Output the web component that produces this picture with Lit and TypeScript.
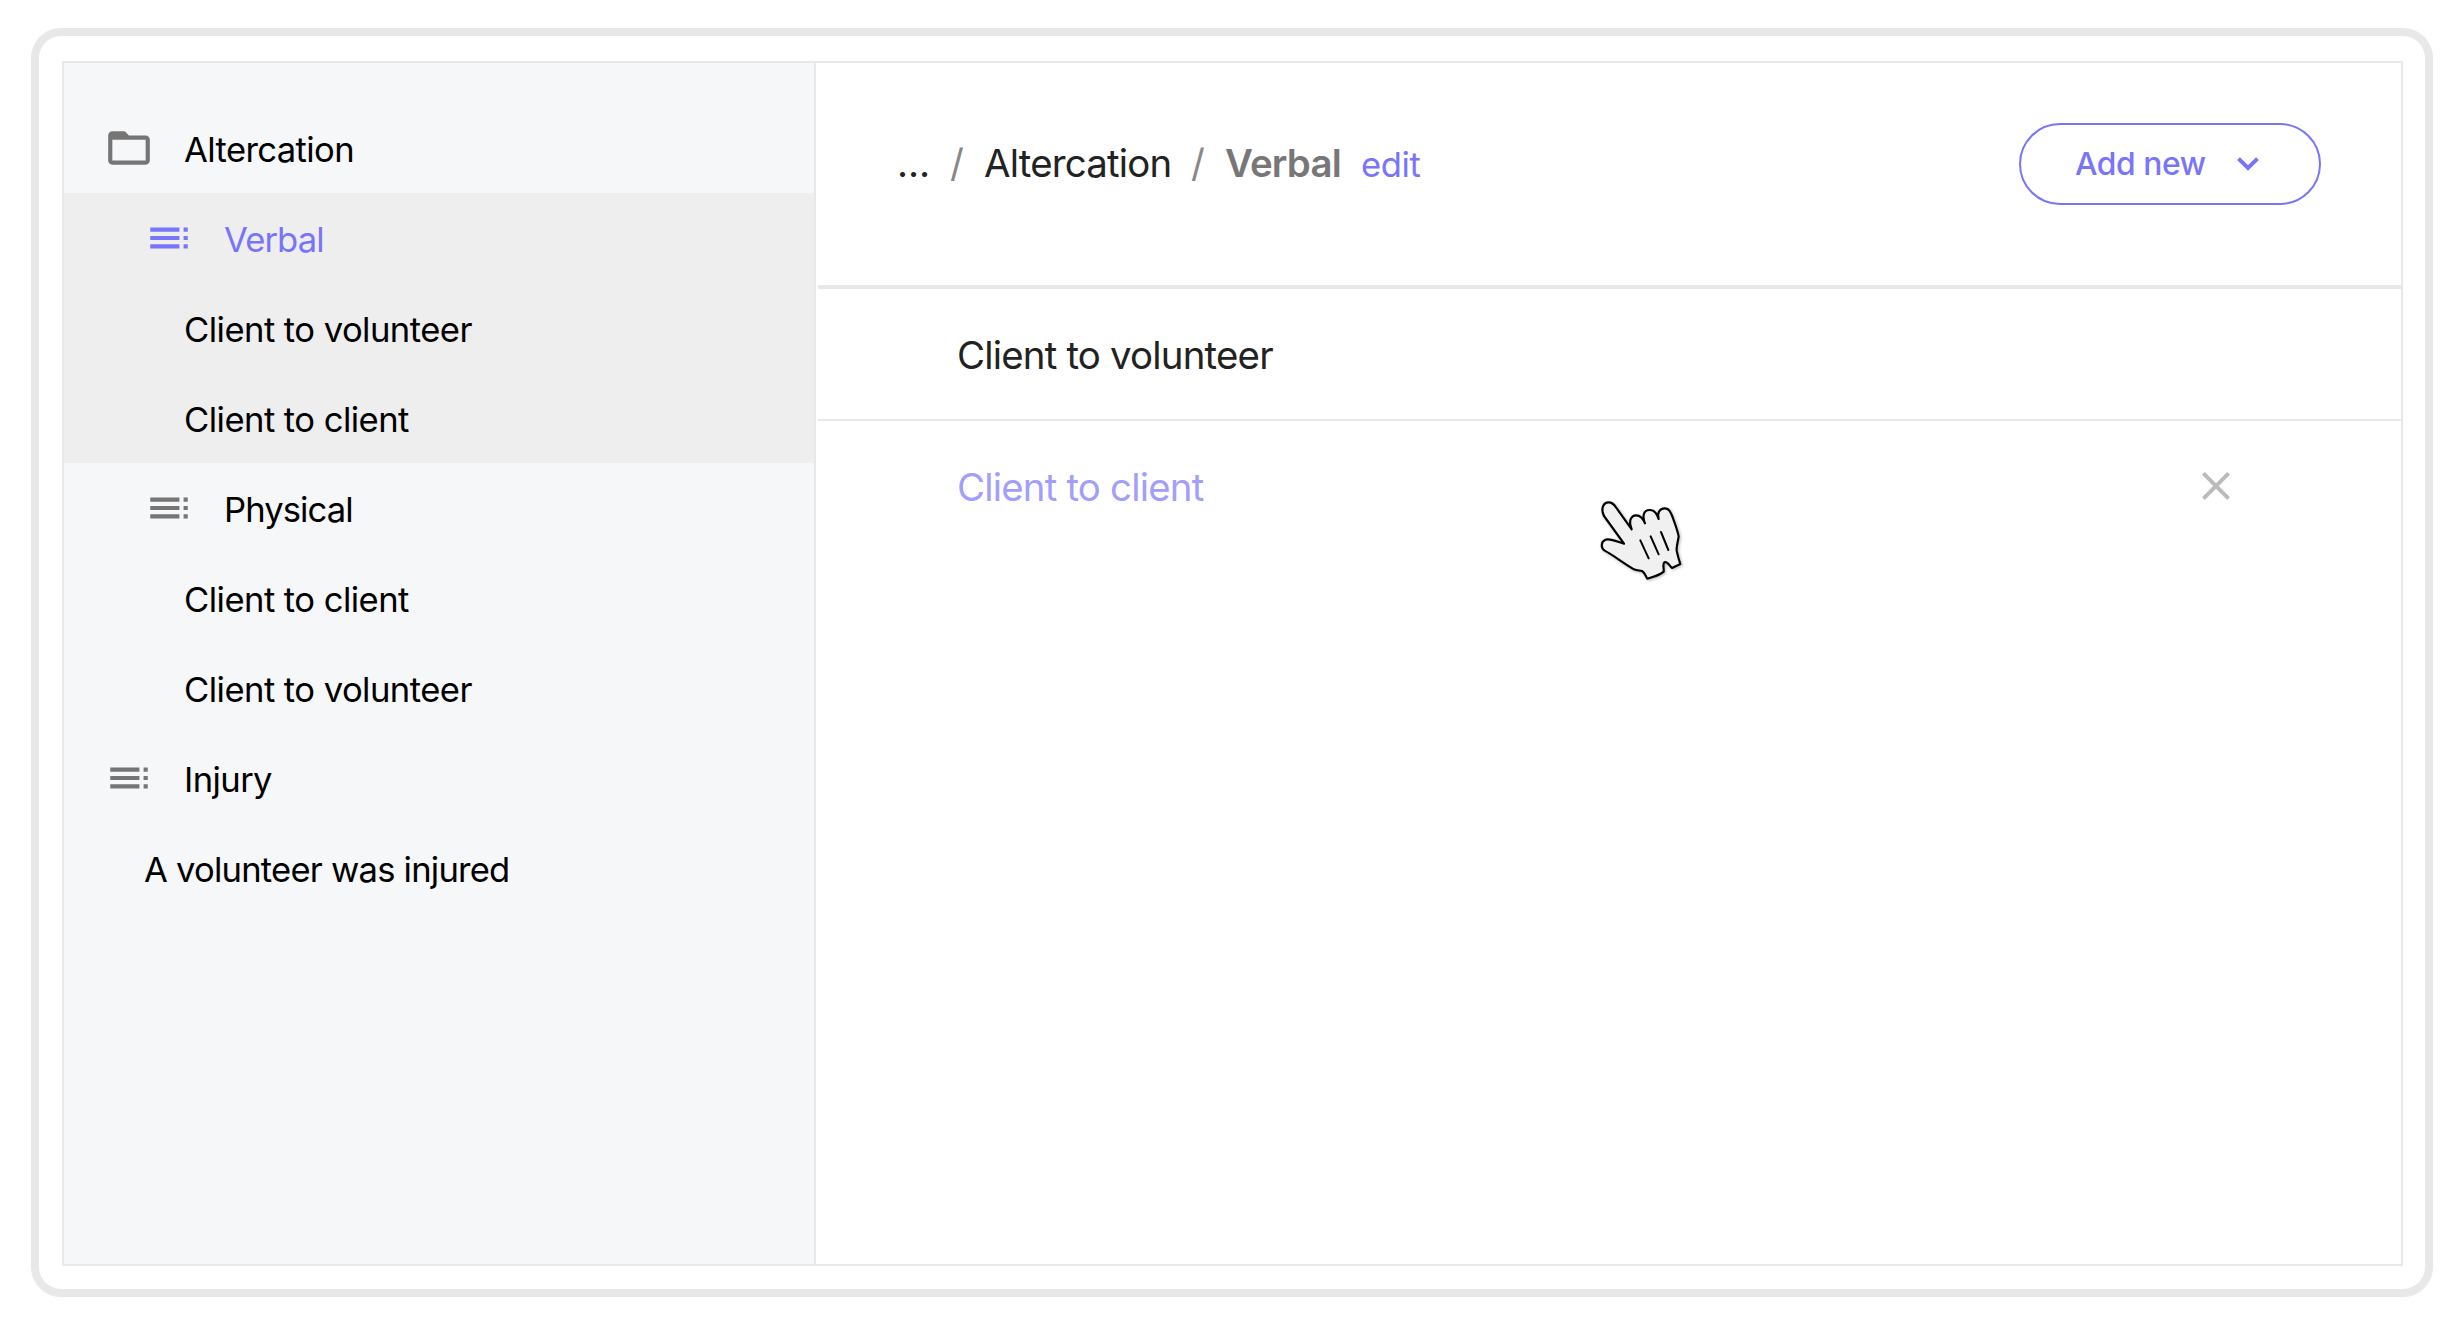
import { LitElement, html, css, svg, nothing } from "lit";
import { customElement, property } from "lit/decorators.js";
import { classMap } from "lit/directives/class-map.js";

type Icon = "folder" | "toc";
interface TreeRow {
  label: string;
  level: "root" | "child" | "leaf" | "root-leaf";
  icon?: Icon;
  active?: boolean;
  shaded?: boolean;
}

const ICONS: Record<Icon, string> = {
  folder:
    "M20 6h-8l-2-2H4c-1.1 0-1.99.9-1.99 2L2 18c0 1.1.9 2 2 2h16c1.1 0 2-.9 2-2V8c0-1.1-.9-2-2-2zm0 12H4V8h16v10z",
  toc: "M3 9h14V7H3v2zm0 4h14v-2H3v2zm0 4h14v-2H3v2zm16 0h2v-2h-2v2zm0-10v2h2V7h-2zm0 6h2v-2h-2v2z",
};

const ROWS: TreeRow[] = [
  { label: "Altercation", level: "root", icon: "folder" },
  { label: "Verbal", level: "child", icon: "toc", active: true, shaded: true },
  { label: "Client to volunteer", level: "leaf", shaded: true },
  { label: "Client to client", level: "leaf", shaded: true },
  { label: "Physical", level: "child", icon: "toc" },
  { label: "Client to client", level: "leaf" },
  { label: "Client to volunteer", level: "leaf" },
  { label: "Injury", level: "root", icon: "toc" },
  { label: "A volunteer was injured", level: "root-leaf" },
];

@customElement("tree-nav")
export class TreeNav extends LitElement {
  @property({ attribute: false }) rows: TreeRow[] = [];

  static styles = css`
    :host {
      display: block;
      box-sizing: border-box;
      padding-top: 40px;
      background: #f6f7f9;
      border-right: 2px solid #e8e8e8;
    }
    .row {
      display: flex;
      align-items: center;
      height: 90px;
      color: #000;
      font-size: 34.6px;
      white-space: nowrap;
    }
    .shaded { background: #eee; }
    .root { padding-left: 40px; letter-spacing: -0.6px; }
    .child { padding-left: 80px; letter-spacing: -0.9px; }
    .leaf { padding-left: 120px; letter-spacing: -0.54px; }
    .root-leaf { padding-left: 80px; letter-spacing: -0.78px; }
    .icon {
      width: 50px;
      height: 50px;
      margin-right: 30px;
      fill: #757575;
    }
    .label { padding-top: 1px; }
    .active { color: #7975fb; }
    .active .icon { fill: #7975fb; }
  `;

  render() {
    return this.rows.map(
      (r) => html`<div
        class=${classMap({ row: true, [r.level]: true, active: !!r.active, shaded: !!r.shaded })}
      >
        ${r.icon
          ? html`<svg class="icon" viewBox="0 0 24 24"><path d=${ICONS[r.icon]}></path></svg>`
          : nothing}
        <span class="label">${r.label}</span>
      </div>`
    );
  }
}

@customElement("app-root")
export class AppRoot extends LitElement {
  static styles = css`
    :host {
      display: block;
      box-sizing: border-box;
      width: 2464px;
      height: 1325px;
      padding: 28px 31px;
      background: #fff;
      font-family: Inter, "Liberation Sans", sans-serif;
    }
    .frame {
      box-sizing: border-box;
      height: 1269px;
      padding: 25px 22px 23px 23px;
      border: 8px solid #e8e8e8;
      border-radius: 30px;
    }
    .window {
      display: grid;
      grid-template-columns: 752px 1fr;
      column-gap: 2px;
      box-sizing: border-box;
      height: 1205px;
      border: 2px solid #e8e8e8;
    }
    .main { position: relative; }
    .header {
      display: flex;
      align-items: flex-start;
      justify-content: space-between;
      box-sizing: border-box;
      height: 226px;
      padding: 0 80px 0 79px;
      border-bottom: 4px solid #e8e8e8;
    }
    .crumbs {
      display: flex;
      align-items: baseline;
      padding-top: 76px;
      font-size: 38.4px;
      line-height: 48px;
      letter-spacing: -0.8px;
      color: #222;
      white-space: nowrap;
    }
    .dots { width: 53px; letter-spacing: -0.1px; }
    .slash { width: 34px; color: #888; }
    .crumb { width: 207px; }
    .current { width: 136px; font-weight: 600; color: #777; }
    .edit { font-size: 34.6px; letter-spacing: -0.4px; color: #7975fb; }
    .add {
      display: flex;
      align-items: center;
      justify-content: space-between;
      box-sizing: border-box;
      width: 302px;
      height: 82px;
      margin-top: 60px;
      padding: 0 60px 0 54px;
      border: 2px solid #7975fb;
      border-radius: 41px;
      background: none;
      color: #7975fb;
      font: 500 31.8px Inter, "Liberation Sans", sans-serif;
      letter-spacing: -0.45px;
      white-space: nowrap;
    }
    .add span { padding-bottom: 1px; }
    .chevron { width: 22px; height: 14px; }
    .item {
      display: flex;
      align-items: center;
      justify-content: space-between;
      box-sizing: border-box;
      height: 132px;
      padding: 0 171px 0 139px;
      border-bottom: 2px solid #e8e8e8;
      font-size: 38.4px;
      letter-spacing: -0.8px;
      color: #222;
    }
    .item span { padding-top: 2px; }
    .item:last-of-type { border-bottom-color: transparent; }
    .hover { color: #a29ffc; }
    .close { width: 28px; height: 28px; }
    .cursor {
      position: absolute;
      left: 742px;
      top: 397px;
      width: 160px;
      height: 150px;
      filter: drop-shadow(1px 1px 1.5px rgba(0, 0, 0, 0.3));
    }
  `;

  private hand = svg`
    <path d="M192 251 L132 168 C122 150 128 127 146 127 C155 127 162 133 168 142 L215 208
      C206 190 209 166 229 166 C243 166 249 176 255 190 C247 170 249 150 269 150 C285 150 290 162 296 177
      C291 160 298 145 314 145 C328 145 333 159 338 172 C346 194 353 212 356 229 C354 244 349 258 350 272
      C353 286 356 298 361 312 L336 324 C328 317 325 306 315 306 C306 309 312 322 311 335
      C299 346 280 351 262 356 C257 349 256 339 246 333 C238 331 231 332 222 328
      C190 310 164 288 134 272 C122 264 122 246 136 239 C152 234 176 247 192 251 Z"
      fill="#f0f0f0" stroke="#000" stroke-width="6.5" stroke-linejoin="round"></path>
    <path d="M241 241 L266 295 M272 229 L296 283 M303 216 L325 270"
      fill="none" stroke="#000" stroke-width="6" stroke-linecap="round"></path>`;

  render() {
    return html`
      <div class="frame">
        <div class="window">
          <tree-nav .rows=${ROWS}></tree-nav>
          <div class="main">
            <div class="header">
              <div class="crumbs">
                <span class="dots">...</span>
                <span class="slash">/</span>
                <span class="crumb">Altercation</span>
                <span class="slash">/</span>
                <span class="current">Verbal</span>
                <span class="edit">edit</span>
              </div>
              <button class="add">
                <span>Add new</span>
                <svg class="chevron" viewBox="0 0 22 14">
                  <path d="M1.5 1.6 L11 11 L20.5 1.6" fill="none" stroke="currentColor" stroke-width="4"></path>
                </svg>
              </button>
            </div>
            <div class="item"><span>Client to volunteer</span></div>
            <div class="item hover">
              <span>Client to client</span>
              <svg class="close" viewBox="0 0 28 28">
                <path d="M1.4 1.4 L26.6 26.6 M26.6 1.4 L1.4 26.6" stroke="#bbb" stroke-width="4"></path>
              </svg>
            </div>
            <svg class="cursor" viewBox="0 0 480 450">${this.hand}</svg>
          </div>
        </div>
      </div>
    `;
  }
}
